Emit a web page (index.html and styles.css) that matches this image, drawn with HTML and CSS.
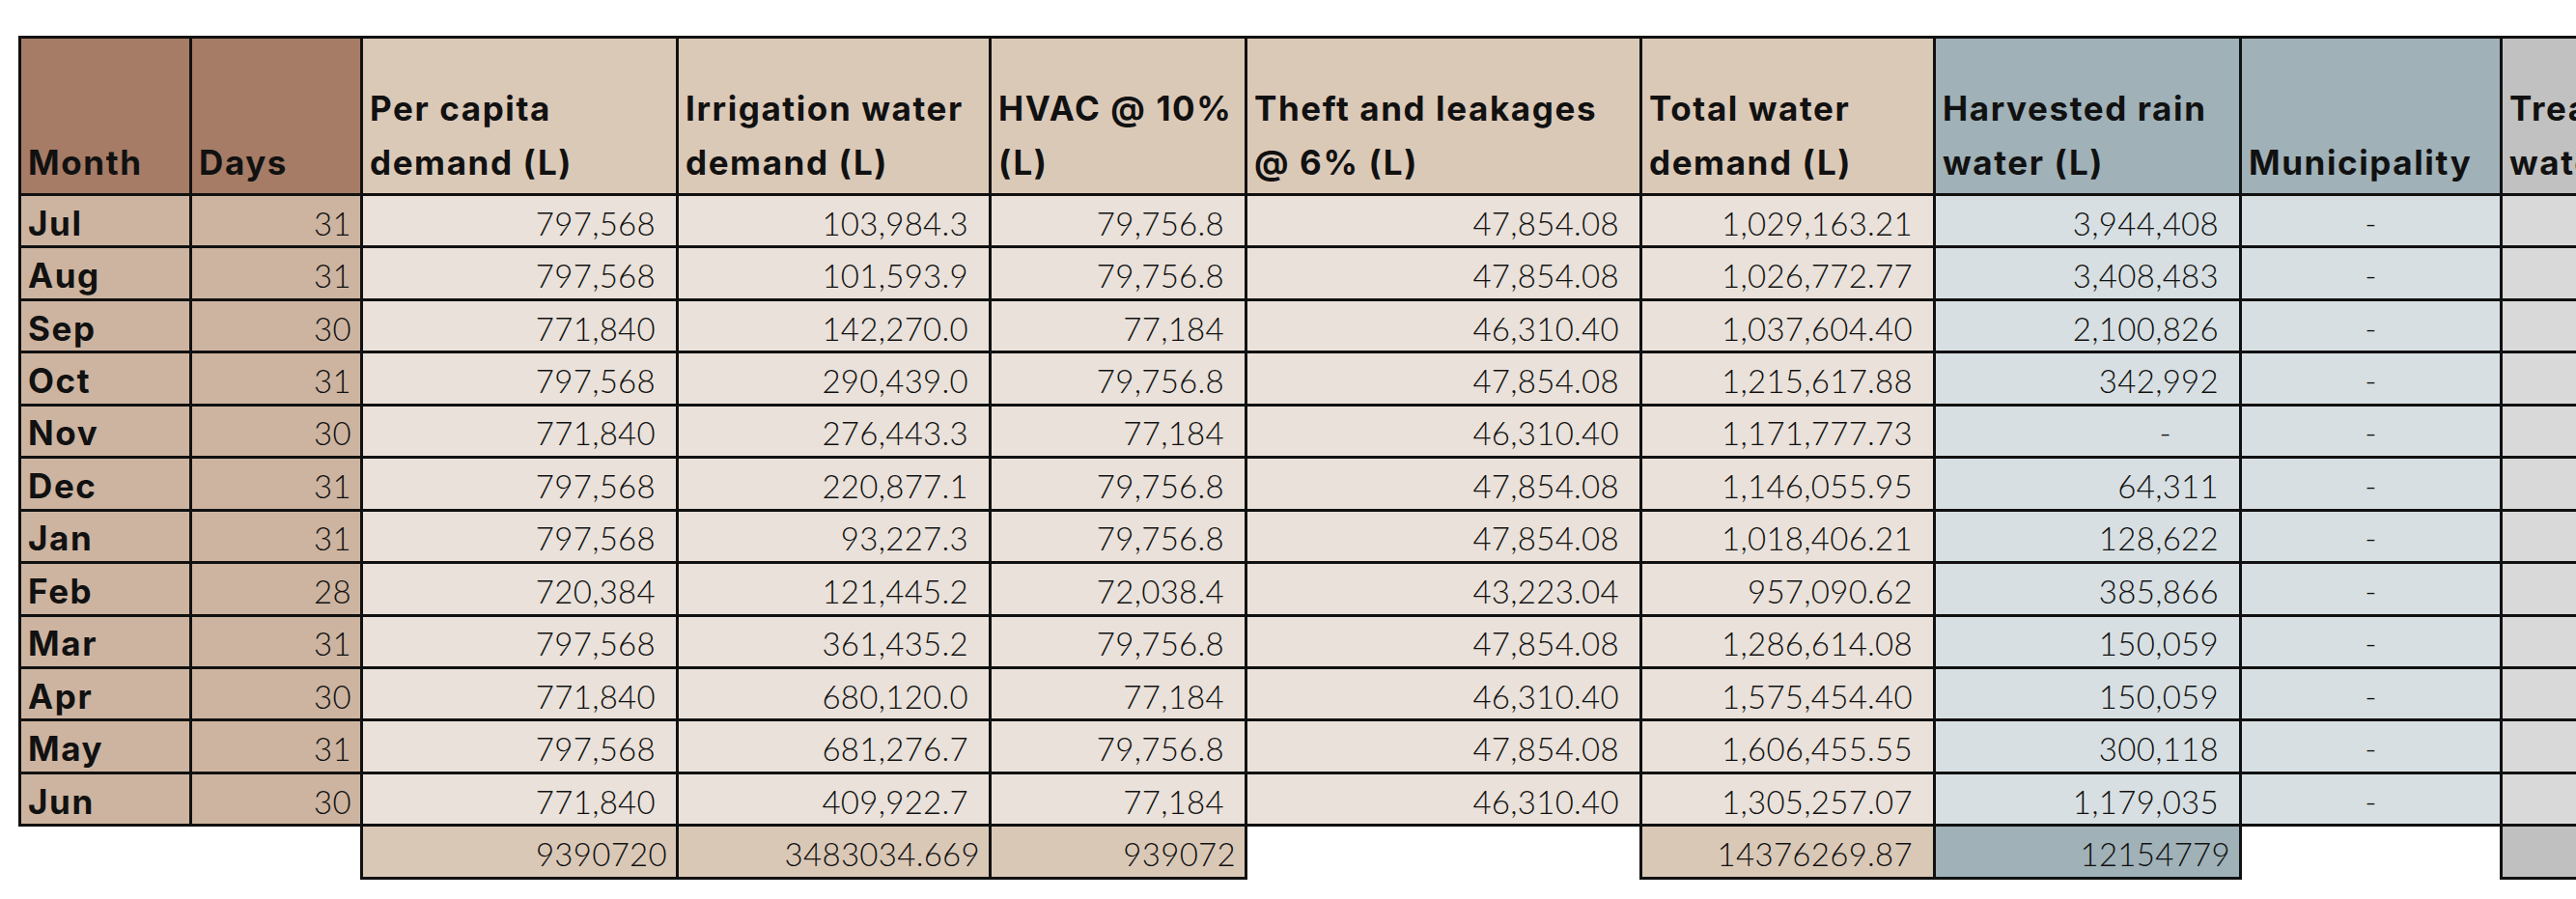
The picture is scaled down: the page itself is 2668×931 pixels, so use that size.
FILE: index.html
```html
<!DOCTYPE html>
<html>
<head>
<meta charset="utf-8">
<link rel="stylesheet" href="styles.css">
</head>
<body>
<table class="sheet">
  <colgroup>
    <col class="c-month"><col class="c-days"><col class="c-per"><col class="c-irr"><col class="c-hvac"><col class="c-theft"><col class="c-total"><col class="c-harv"><col class="c-mun"><col class="c-treat">
  </colgroup>
  <thead>
    <tr>
      <th class="h-brown">Month</th>
      <th class="h-brown">Days</th>
      <th class="h-tan">Per capita<br>demand (L)</th>
      <th class="h-tan">Irrigation water<br>demand (L)</th>
      <th class="h-tan">HVAC @ 10%<br>(L)</th>
      <th class="h-tan">Theft and leakages<br>@ 6% (L)</th>
      <th class="h-tan">Total water<br>demand (L)</th>
      <th class="h-blue">Harvested rain<br>water (L)</th>
      <th class="h-blue">Municipality</th>
      <th class="h-grey">Treated<br>water (L)</th>
    </tr>
  </thead>
  <tbody>
    <tr><td class="m">Jul</td><td class="d">31</td><td class="n">797,568</td><td class="n">103,984.3</td><td class="n">79,756.8</td><td class="n">47,854.08</td><td class="n">1,029,163.21</td><td class="b">3,944,408</td><td class="b mun">-</td><td class="g"></td></tr>
    <tr><td class="m">Aug</td><td class="d">31</td><td class="n">797,568</td><td class="n">101,593.9</td><td class="n">79,756.8</td><td class="n">47,854.08</td><td class="n">1,026,772.77</td><td class="b">3,408,483</td><td class="b mun">-</td><td class="g"></td></tr>
    <tr><td class="m">Sep</td><td class="d">30</td><td class="n">771,840</td><td class="n">142,270.0</td><td class="n">77,184</td><td class="n">46,310.40</td><td class="n">1,037,604.40</td><td class="b">2,100,826</td><td class="b mun">-</td><td class="g"></td></tr>
    <tr><td class="m">Oct</td><td class="d">31</td><td class="n">797,568</td><td class="n">290,439.0</td><td class="n">79,756.8</td><td class="n">47,854.08</td><td class="n">1,215,617.88</td><td class="b">342,992</td><td class="b mun">-</td><td class="g"></td></tr>
    <tr><td class="m">Nov</td><td class="d">30</td><td class="n">771,840</td><td class="n">276,443.3</td><td class="n">77,184</td><td class="n">46,310.40</td><td class="n">1,171,777.73</td><td class="b dash">-</td><td class="b mun">-</td><td class="g"></td></tr>
    <tr><td class="m">Dec</td><td class="d">31</td><td class="n">797,568</td><td class="n">220,877.1</td><td class="n">79,756.8</td><td class="n">47,854.08</td><td class="n">1,146,055.95</td><td class="b">64,311</td><td class="b mun">-</td><td class="g"></td></tr>
    <tr><td class="m">Jan</td><td class="d">31</td><td class="n">797,568</td><td class="n">93,227.3</td><td class="n">79,756.8</td><td class="n">47,854.08</td><td class="n">1,018,406.21</td><td class="b">128,622</td><td class="b mun">-</td><td class="g"></td></tr>
    <tr><td class="m">Feb</td><td class="d">28</td><td class="n">720,384</td><td class="n">121,445.2</td><td class="n">72,038.4</td><td class="n">43,223.04</td><td class="n">957,090.62</td><td class="b">385,866</td><td class="b mun">-</td><td class="g"></td></tr>
    <tr><td class="m">Mar</td><td class="d">31</td><td class="n">797,568</td><td class="n">361,435.2</td><td class="n">79,756.8</td><td class="n">47,854.08</td><td class="n">1,286,614.08</td><td class="b">150,059</td><td class="b mun">-</td><td class="g"></td></tr>
    <tr><td class="m">Apr</td><td class="d">30</td><td class="n">771,840</td><td class="n">680,120.0</td><td class="n">77,184</td><td class="n">46,310.40</td><td class="n">1,575,454.40</td><td class="b">150,059</td><td class="b mun">-</td><td class="g"></td></tr>
    <tr><td class="m">May</td><td class="d">31</td><td class="n">797,568</td><td class="n">681,276.7</td><td class="n">79,756.8</td><td class="n">47,854.08</td><td class="n">1,606,455.55</td><td class="b">300,118</td><td class="b mun">-</td><td class="g"></td></tr>
    <tr><td class="m">Jun</td><td class="d">30</td><td class="n">771,840</td><td class="n">409,922.7</td><td class="n">77,184</td><td class="n">46,310.40</td><td class="n">1,305,257.07</td><td class="b">1,179,035</td><td class="b mun">-</td><td class="g"></td></tr>
  </tbody>
  <tfoot>
    <tr>
      <td class="blank"></td><td class="blank"></td>
      <td class="t-tan t-pad">9390720</td>
      <td class="t-tan t-pad">3483034.669</td>
      <td class="t-tan t-pad">939072</td>
      <td class="blank"></td>
      <td class="t-tan">14376269.87</td>
      <td class="t-blue t-pad">12154779</td>
      <td class="blank"></td>
      <td class="t-grey"></td>
    </tr>
  </tfoot>
</table>
</body>
</html>
```

FILE: styles.css
```css
html, body {
  margin: 0;
  padding: 0;
  background: #ffffff;
  overflow: hidden;
}

body {
  padding: 37px 0 0 19px;
  font-family: Inter, "Liberation Sans", sans-serif;
  color: #111111;
}

.sheet {
  border-collapse: collapse;
  table-layout: fixed;
  width: 2929px;
}

.c-month { width: 177px; }
.c-days { width: 177px; }
.c-per { width: 327px; }
.c-irr { width: 324px; }
.c-hvac { width: 265px; }
.c-theft { width: 409px; }
.c-total { width: 304px; }
.c-harv { width: 317px; }
.c-mun { width: 270px; }
.c-treat { width: 359px; }

.sheet th,
.sheet td {
  border: 3px solid #111111;
  padding: 0;
  overflow: hidden;
  white-space: nowrap;
}

.sheet thead tr { height: 163px; }
.sheet tbody tr { height: 54.45px; }
.sheet tfoot tr { height: 55px; }

.sheet th {
  text-align: left;
  vertical-align: bottom;
  font-size: 35px;
  font-weight: 700;
  line-height: 56px;
  padding: 0 4px 4px 7px;
  letter-spacing: 1.6px;
}

.h-brown { background: #a67c66; }
.h-tan { background: #dbc9b8; }
.h-blue { background: #a0b1b8; }
.h-grey { background: #c1c1c1; }

.sheet tbody td,
.sheet tfoot td {
  font-family: Lato, Inter, sans-serif;
  font-size: 33px;
  font-weight: 300;
  line-height: 40px;
  vertical-align: middle;
  text-align: right;
  padding: 4px 21px 0 8px;
  letter-spacing: 0.3px;
}

.sheet tbody td.m {
  font-family: Inter, "Liberation Sans", sans-serif;
  background: #cdb4a0;
  text-align: left;
  font-weight: 700;
  font-size: 35px;
  letter-spacing: 1.6px;
  padding-left: 7px;
}

.sheet tbody td.d {
  background: #cdb4a0;
  padding-right: 9px;
}

.sheet tbody td.n { background: #e9e1da; }
.sheet tbody td.b { background: #d7dfe2; }
.sheet tbody td.g { background: #d9d9d9; }

.sheet tbody td.mun {
  text-align: center;
  padding-right: 8px;
}

.sheet tbody td.dash {
  padding-right: 70px;
}

.sheet tfoot td.t-pad { padding-right: 9px; }

.sheet tfoot td.blank {
  border: none;
  background: transparent;
}

.t-tan { background: #dac8b7; }
.t-blue { background: #a0b1b8; }
.t-grey { background: #c0c0c0; }
```
